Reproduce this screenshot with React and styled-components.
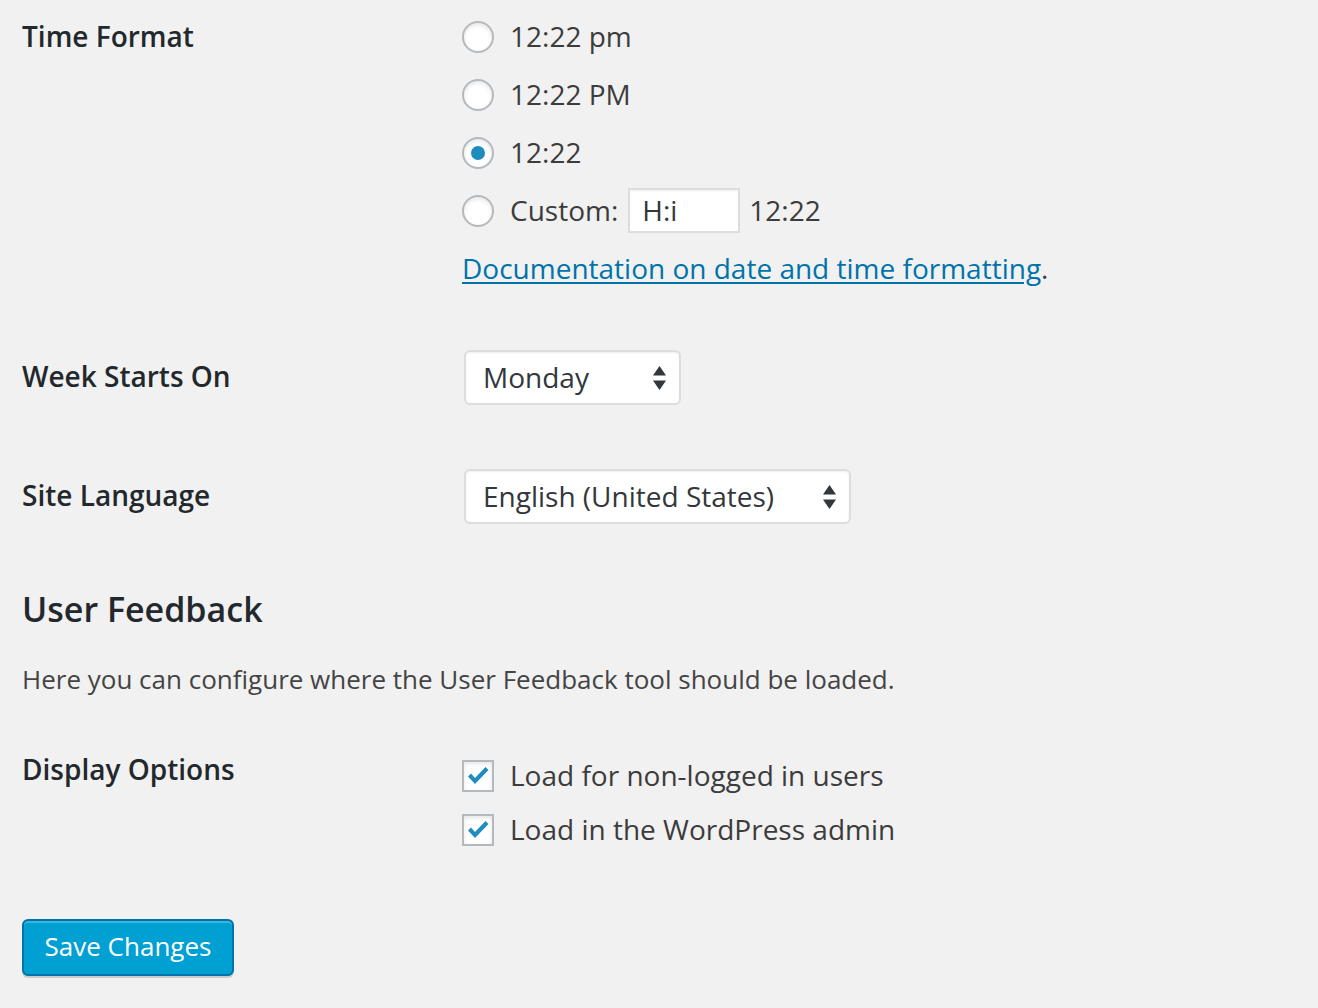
import React from "react";
import styled, { createGlobalStyle } from "styled-components";

const Global = createGlobalStyle`
  html, body { margin: 0; padding: 0; background: #f1f1f1; }
  body { font-family: "Open Sans", "Noto Sans", "Liberation Sans", sans-serif; color: #444; }
  * { box-sizing: border-box; }
`;

const Page = styled.div`
  padding: 0 0 0 22px;
  width: 1318px;
  min-height: 1008px;
`;

const Row = styled.div`
  display: grid;
  grid-template-columns: 440px 1fr;
  align-items: start;
  padding-top: ${(p) => p.$top || 0}px;
`;

const Label = styled.div`
  font-size: 28px;
  font-weight: 600;
  color: #23282d;
  line-height: ${(p) => p.$lh || 40}px;
  margin-top: ${(p) => p.$mt || 0}px;
`;

const Field = styled.div`
  display: flex;
  flex-direction: column;
  gap: ${(p) => p.$gap || 18}px;
  padding-top: ${(p) => p.$top || 0}px;
`;

const Option = styled.label`
  display: flex;
  align-items: center;
  height: 40px;
  font-size: 28px;
  color: #3c3c3c;
  white-space: nowrap;
`;

const Radio = styled.span`
  width: 32px;
  height: 32px;
  border-radius: 50%;
  border: 2px solid #b4b9be;
  background: #fff;
  box-shadow: inset 0 2px 4px rgba(0, 0, 0, 0.1);
  margin-right: 16px;
  margin-top: 2px;
  display: flex;
  align-items: center;
  justify-content: center;
  flex: none;
  &::after {
    content: "";
    width: 14px;
    height: 14px;
    border-radius: 50%;
    background: ${(p) => (p.$checked ? "#1e8cbe" : "transparent")};
  }
`;

const TextInput = styled.span`
  display: inline-flex;
  align-items: center;
  width: 112px;
  height: 45px;
  margin: 0 9px 0 10px;
  padding-left: 12px;
  background: #fff;
  border: 2px solid #ddd;
  box-shadow: inset 0 1px 2px rgba(0, 0, 0, 0.07);
  color: #32373c;
  font-size: 28px;
`;

const Link = styled.div`
  font-size: 28px;
  line-height: 40px;
  color: #3c3c3c;
  a {
    color: #0073aa;
    text-decoration: underline;
    text-underline-offset: 3px;
    text-decoration-thickness: 2px;
  }
`;

const Select = styled.div`
  display: flex;
  align-items: center;
  justify-content: space-between;
  width: ${(p) => p.$w}px;
  height: 55px;
  margin-left: 2px;
  padding: 0 13px 2px 17px;
  background: #fff;
  border: 2px solid #ddd;
  border-radius: 6px;
  box-shadow: inset 0 1px 2px rgba(0, 0, 0, 0.07);
  font-size: 28px;
  color: #32373c;
  white-space: nowrap;
  svg { margin-top: 2px; }
`;

const Heading = styled.h2`
  margin: 0;
  font-size: 34px;
  font-weight: 600;
  color: #23282d;
  line-height: 40px;
  padding-top: ${(p) => p.$top}px;
`;

const Desc = styled.p`
  margin: 0;
  font-size: 26px;
  line-height: 36px;
  color: #444;
  padding-top: ${(p) => p.$top}px;
`;

const Check = styled.span`
  width: 32px;
  height: 32px;
  border: 2px solid #b4b9be;
  background: #fff;
  box-shadow: inset 0 2px 4px rgba(0, 0, 0, 0.1);
  margin-right: 16px;
  margin-top: 2px;
  display: flex;
  align-items: center;
  justify-content: center;
  flex: none;
`;

const Button = styled.button`
  margin-top: ${(p) => p.$top}px;
  width: 212px;
  height: 57px;
  background: #00a0d2;
  border: 2px solid #0073aa;
  border-radius: 6px;
  box-shadow: inset 0 2px 0 rgba(120, 200, 230, 0.5), 0 2px 0 rgba(0, 0, 0, 0.15);
  color: #fff;
  font-family: "Open Sans", "Noto Sans", sans-serif;
  font-size: 26px;
  padding: 0 0 4px;
`;

const Arrows = () => (
  <svg width="13" height="24" viewBox="0 0 13 24">
    <path d="M6.5 0 L13 9.5 H0 Z" fill="#32373c" />
    <path d="M0 14.5 H13 L6.5 24 Z" fill="#32373c" />
  </svg>
);

const Tick = () => (
  <svg width="24" height="22" viewBox="0 0 24 22">
    <path d="M2 11.5 L5 8.5 L9 13 L19.5 2 L22.5 5 L9 19 Z" fill="#1e8cbe" />
  </svg>
);

export default function App() {
  return (
    <Page>
      <Global />
      <Row $top={16}>
        <Label>Time Format</Label>
        <Field>
          <Option><Radio />12:22 pm</Option>
          <Option><Radio />12:22 PM</Option>
          <Option><Radio $checked />12:22</Option>
          <Option>
            <Radio />Custom:<TextInput>H:i</TextInput>12:22
          </Option>
          <Link>
            <a>Documentation on date and time formatting</a>.
          </Link>
        </Field>
      </Row>
      <Row $top={62}>
        <Label $lh={53}>Week Starts On</Label>
        <Select $w={217}>
          Monday
          <Arrows />
        </Select>
      </Row>
      <Row $top={64}>
        <Label $lh={53}>Site Language</Label>
        <Select $w={387}>
          English (United States)
          <Arrows />
        </Select>
      </Row>
      <Heading $top={65}>User Feedback</Heading>
      <Desc $top={32}>Here you can configure where the User Feedback tool should be loaded.</Desc>
      <Row $top={52}>
        <Label>Display Options</Label>
        <Field $gap={14} $top={6}>
          <Option><Check><Tick /></Check>Load for non-logged in users</Option>
          <Option><Check><Tick /></Check>Load in the WordPress admin</Option>
        </Field>
      </Row>
      <Button $top={70}>Save Changes</Button>
    </Page>
  );
}
